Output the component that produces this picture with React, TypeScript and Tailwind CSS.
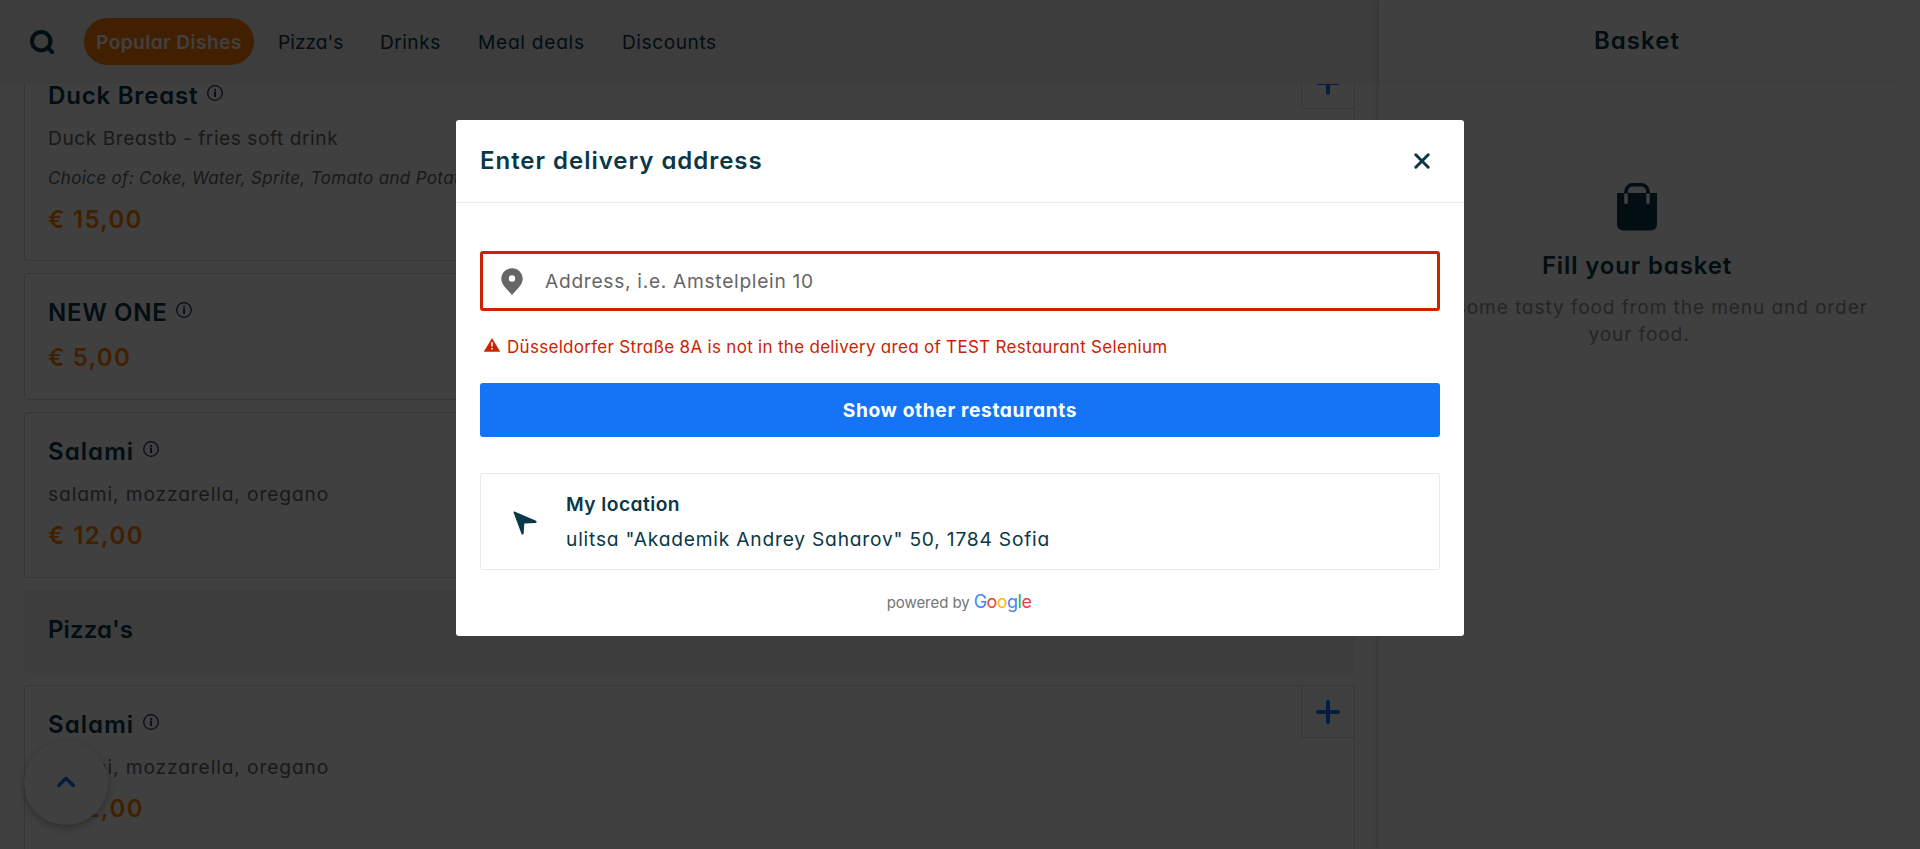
import type { ReactNode } from "react";

function InfoIcon() {
  return (
    <svg width="16" height="16" viewBox="0 0 16 16" fill="none" className="shrink-0">
      <circle cx="8" cy="8" r="7.3" stroke="#0a3847" strokeWidth="1.3" />
      <rect x="7.1" y="6.6" width="1.9" height="5.4" fill="#0a3847" />
      <rect x="7.1" y="3.9" width="1.9" height="1.8" fill="#0a3847" />
    </svg>
  );
}

function AddButton() {
  return (
    <button className="absolute -right-px -top-px flex h-[53px] w-[54px] items-center justify-center rounded-[3px] border border-[#d7d7d7]">
      <svg width="24" height="24" viewBox="0 0 24 24" stroke="#1574f5" strokeWidth="4" strokeLinecap="round">
        <path d="M12 2v20M2 12h20" />
      </svg>
    </button>
  );
}

type DishProps = {
  title: ReactNode;
  description?: ReactNode;
  choices?: string;
  price: ReactNode;
  className: string;
};

function Dish({ title, description, choices, price, className }: DishProps) {
  return (
    <article className={`relative shrink-0 rounded-[3px] border border-[#d7d7d7] px-[23px] pt-[23px] ${className}`}>
      <div className="flex h-8 items-start text-2xl leading-8 font-semibold text-[#0a3847]">
        {title}
        <span className="mt-[5px] ml-[9px]">
          <InfoIcon />
        </span>
      </div>
      {description && <p className="mt-3 text-[19.2px] leading-7 text-[#666]">{description}</p>}
      {choices && (
        <p className="mt-3 text-[17px] leading-7 tracking-[0.34px] whitespace-nowrap text-[#666] italic">{choices}</p>
      )}
      <p className="mt-3 text-2xl leading-8 font-semibold text-[#ff8000]">{price}</p>
      <AddButton />
    </article>
  );
}

function Salami({ className }: { className: string }) {
  return (
    <Dish
      className={className}
      title={<span className="tracking-[1.08px]">Salami</span>}
      description={<span className="tracking-[0.88px]">salami, mozzarella, oregano</span>}
      price={<span className="tracking-[1.4px]">€ 12,00</span>}
    />
  );
}

function Header() {
  return (
    <header className="relative z-10 flex h-[84px] items-start bg-[#f2f2f2] text-[19.2px] leading-[48px] text-[#0a3847]">
      <svg width="24" height="24" viewBox="0 0 24 24" fill="none" stroke="#0a3847" strokeWidth="4" className="mt-[30px] ml-[30px]">
        <circle cx="11.2" cy="11.2" r="9.2" />
        <path d="M17.8 17.8L22.2 22.2" strokeLinecap="round" />
      </svg>
      <nav className="mt-[18px] ml-[30px] flex">
        <span className="h-[47px] w-[170px] rounded-full bg-[#ff8000] pl-3 font-semibold tracking-[0.4px] text-white">Popular Dishes</span>
        <span className="ml-6 w-[102px]">Pizza's</span>
        <span className="w-[98px] tracking-[0.45px]">Drinks</span>
        <span className="w-36 tracking-[0.7px]">Meal deals</span>
        <span className="tracking-[0.52px]">Discounts</span>
      </nav>
    </header>
  );
}

function Basket() {
  return (
    <aside className="relative z-20 flex-1 bg-white pr-[25px] text-center shadow-[0_0_8px_rgba(0,0,0,0.22)]">
      <h2 className="h-[82px] border-b border-[#ebebeb] pt-[25px] text-2xl leading-8 font-semibold tracking-[1.04px] text-[#0a3847]">Basket</h2>
      <svg width="40" height="48" viewBox="0 0 40 48" className="mx-auto mt-[101px]">
        <path d="M0 10h40v31.500a6 6 0 0 1-6 6H6a6 6 0 0 1-6-6z" fill="#0a3847" />
        <path d="M9 11V8.500A6.700 6.700 0 0 1 15.700 1.800h8.600A6.700 6.700 0 0 1 31 8.500V11" fill="none" stroke="#0a3847" strokeWidth="3.600" />
        <path d="M9 11V19.500M31 11V19.500" stroke="#fff" strokeWidth="3.600" strokeLinecap="round" />
        <path d="M7 9.800h4M29 9.800h4" stroke="#0a3847" strokeWidth="1.500" />
      </svg>
      <h3 className="mt-[19px] text-2xl leading-8 font-semibold tracking-[0.86px] text-[#0a3847]">Fill your basket</h3>
      <p className="-mr-1 mt-3 text-[19.2px] leading-[27px] tracking-[0.84px] text-[#949494]">
        Add some tasty food from the menu and order
        <br />
        your food.
      </p>
    </aside>
  );
}

function AddressModal() {
  return (
    <section className="h-[516px] w-[1008px] rounded-[3px] bg-white text-[#0a3847]">
      <header className="flex h-[83px] items-start justify-between border-b border-[#ebebeb] pr-[34px] pl-6">
        <h1 className="mt-[25px] text-2xl leading-8 font-semibold tracking-[0.97px]">Enter delivery address</h1>
        <svg width="16" height="16" viewBox="0 0 16 16" stroke="#0a3847" strokeWidth="3" strokeLinecap="round" className="mt-[33px]">
          <path d="M1.800 1.800L14.200 14.200M14.200 1.800L1.800 14.200" />
        </svg>
      </header>
      <div className="px-6 pt-12">
        <div className="flex h-[60px] items-center rounded-[3px] border-[3px] border-[#cc2200] pl-[18px] text-[19.2px] tracking-[0.7px] text-[#666]">
          <svg width="22" height="27" viewBox="0 0 22 27" className="mr-[22px]">
            <path fillRule="evenodd" fill="#666" d="M11 .2C5 .2.300 4.900.300 10.800c0 3.300 1.500 5.800 3.500 8.200L11 27l7.200-8c2-2.400 3.500-4.900 3.500-8.200C21.700 4.900 17 .2 11 .2zm0 7.100a3.200 3.200 0 1 1 0 6.400 3.200 3.200 0 0 1 0-6.400z" />
          </svg>
          <span>Address, i.e. Amstelplein 10</span>
        </div>
        <div className="mt-6 flex h-6 items-center pl-1 text-[17px] leading-6 text-[#cc2200]">
          <svg width="16" height="14" viewBox="0 0 16 14" className="mr-[7px] mb-1">
            <path d="M8 .500L15.800 13.500H.200z" fill="#cc2200" stroke="#cc2200" strokeWidth=".5" strokeLinejoin="round" />
            <path d="M7.200 4.300h1.600v4.200H7.200zM7.200 10h1.600v1.600H7.200z" fill="#fff" />
          </svg>
          <span className="tracking-[0.3px]">Düsseldorfer Straße 8A is not in the delivery area of TEST Restaurant Selenium</span>
        </div>
        <button className="mt-6 flex h-[54px] w-full items-center justify-center rounded-[3px] bg-[#1574f5] text-[19.2px] font-bold tracking-[0.62px] text-white">
          Show other restaurants
        </button>
        <div className="mt-9 flex h-[97px] rounded-[3px] border border-[#ebebeb] text-[19.2px]">
          <svg width="24" height="24" viewBox="0 0 24 24" className="mt-[37px] ml-8">
            <path d="M1.200 1.200L22.800 10.500V11.200L10.700 11.900L9.900 22.800H9.200z" fill="#0a3847" stroke="#0a3847" strokeWidth="1.400" strokeLinejoin="round" />
          </svg>
          <div className="mt-4 ml-[29px] leading-7">
            <p className="font-semibold tracking-[0.45px]">My location</p>
            <p className="mt-[7px] tracking-[0.79px]">ulitsa "Akademik Andrey Saharov" 50, 1784 Sofia</p>
          </div>
        </div>
        <div className="mt-[18px] flex items-baseline justify-center pr-0.5 leading-7">
          <span className="mr-1 text-[15px] tracking-[-0.05px] text-[#757575]">powered by</span>
          <span className="text-[18px] tracking-[-0.55px]">
            <span className="text-[#4285f4]">G</span>
            <span className="text-[#ea4335]">o</span>
            <span className="text-[#fbbc05]">o</span>
            <span className="text-[#4285f4]">g</span>
            <span className="text-[#34a853]">l</span>
            <span className="text-[#ea4335]">e</span>
          </span>
        </div>
      </div>
    </section>
  );
}

export default function App() {
  return (
    <div className="relative flex h-[849px] overflow-hidden bg-white font-[Inter,sans-serif] [font-feature-settings:'cv11']">
      <main className="w-[1379px] shrink-0">
        <Header />
        <div className="-mt-7 flex w-[1355px] flex-col gap-3 pl-6">
          <Dish
            className="h-[205px]"
            title={<span className="tracking-[0.8px]">Duck Breast</span>}
            description={<span className="tracking-[0.53px]">Duck Breastb - fries soft drink</span>}
            choices="Choice of: Coke, Water, Sprite, Tomato and Potato."
            price={<span className="tracking-[1.3px]">€ 15,00</span>}
          />
          <Dish
            className="h-[127px]"
            title={<span className="tracking-[0.7px]">NEW ONE</span>}
            price={<span className="relative top-px tracking-[1.25px]">€ 5,00</span>}
          />
          <Salami className="h-[166px]" />
          <h2 className="h-[83px] shrink-0 rounded-[3px] bg-[#f2f2f2] px-6 pt-6 text-2xl leading-8 font-semibold tracking-[0.1px] text-[#0a3847]">Pizza's</h2>
          <Salami className="h-[180px]" />
        </div>
      </main>
      <Basket />
      <button className="absolute top-[741px] left-6 z-20 flex h-[84px] w-[84px] items-center justify-center rounded-full bg-white shadow-[0_3px_8px_rgba(0,0,0,0.3)]">
        <svg width="18" height="12" viewBox="0 0 18 12" fill="none" stroke="#1574f5" strokeWidth="3.500" strokeLinecap="round" strokeLinejoin="round" className="mb-0.5">
          <path d="M1.800 9.500L9 2.300L16.200 9.500" />
        </svg>
      </button>
      <div className="absolute inset-0 z-30 flex items-start justify-center bg-black/75 pt-[120px]">
        <AddressModal />
      </div>
    </div>
  );
}
